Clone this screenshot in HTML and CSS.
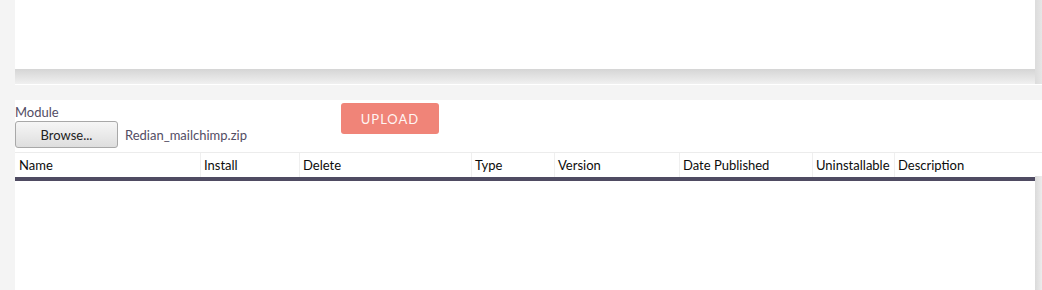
FILE: index.html
```html
<!DOCTYPE html>
<html>
<head>
  <title>Module Loader</title>
  <link rel="stylesheet" href="styles.css">
</head>
<body>
  <div class="frame">
    <div class="frame-view"></div>
    <div class="frame-hbar"></div>
    <div class="frame-vbar"></div>
  </div>

  <div class="loader">
    <form class="upload-form">
      <div class="upload-field">
        <label class="upload-label" for="module-file">Module</label>
        <div class="file-row">
          <button type="button" class="browse">Browse...</button>
          <span class="file-name">Redian_mailchimp.zip</span>
        </div>
      </div>
      <button type="button" class="upload">UPLOAD</button>
    </form>

    <div class="grid-head">
      <div class="cell">Name</div>
      <div class="cell">Install</div>
      <div class="cell">Delete</div>
      <div class="cell">Type</div>
      <div class="cell">Version</div>
      <div class="cell">Date Published</div>
      <div class="cell">Uninstallable</div>
      <div class="cell">Description</div>
    </div>

    <div class="grid-body">
      <div class="rows"></div>
      <div class="rows-vbar"></div>
    </div>
  </div>
</body>
</html>
```

FILE: styles.css
```css
html, body {
  margin: 0;
  height: 100%;
}
body {
  background: #f4f4f4;
  padding-left: 15px;
  font-family: Lato, "Open Sans", sans-serif;
  font-size: 13px;
  overflow: hidden;
}

/* top frame with its fake scrollbars */
.frame {
  display: grid;
  grid-template-columns: 1fr 7px;
  grid-template-rows: 69px 15px;
  border-bottom: 1px solid #fff;
}
.frame-view { background: #fff; }
.frame-hbar {
  grid-row: 2;
  background: linear-gradient(#d5d5d5, #f0f0f0);
}
.frame-vbar {
  grid-column: 2;
  grid-row: 1 / 3;
  background: linear-gradient(90deg, #dcdcdc, #e6e6e6);
}

.loader {
  margin-top: 15px;
  background: #fff;
  height: 200px;
}

.upload-form {
  display: flex;
  align-items: flex-start;
  padding-top: 4px;
}
.upload-field { width: 326px; }
.upload-label {
  display: block;
  line-height: 16px;
  color: #534d64;
}
.file-row {
  display: flex;
  align-items: center;
  gap: 7px;
  margin-top: 1px;
}
.browse {
  width: 103px;
  height: 27px;
  font: inherit;
  color: #222;
  border: 1px solid #a8a8a8;
  border-radius: 3px;
  background: linear-gradient(#f6f6f6, #dedede);
  padding: 0;
}
.file-name { color: #534d64; }
.upload {
  margin-top: -1px;
  width: 98px;
  height: 31px;
  border: 0;
  border-radius: 3px;
  background: #f08478;
  color: #fff5f3;
  font: inherit;
  letter-spacing: 1px;
  padding: 0;
}

.grid-head {
  margin-top: 4px;
  display: grid;
  grid-template-columns: 185px 99px 172px 83px 125px 133px 82px 1fr;
  border-top: 1px solid #ececec;
}
.cell {
  line-height: 24px;
  padding-left: 3px;
  border-left: 1px solid #efefef;
  color: #0c0c0c;
  white-space: nowrap;
}
.cell:first-child {
  border-left: 0;
  padding-left: 4px;
}

.grid-body {
  display: grid;
  grid-template-columns: 1fr 7px;
  height: 120px;
}
.rows {
  border-top: 4px solid #4f4b62;
  background: #fff;
}
.rows-vbar {
  margin-top: -1px;
  background: linear-gradient(90deg, #dadada, #ececec);
}
```
